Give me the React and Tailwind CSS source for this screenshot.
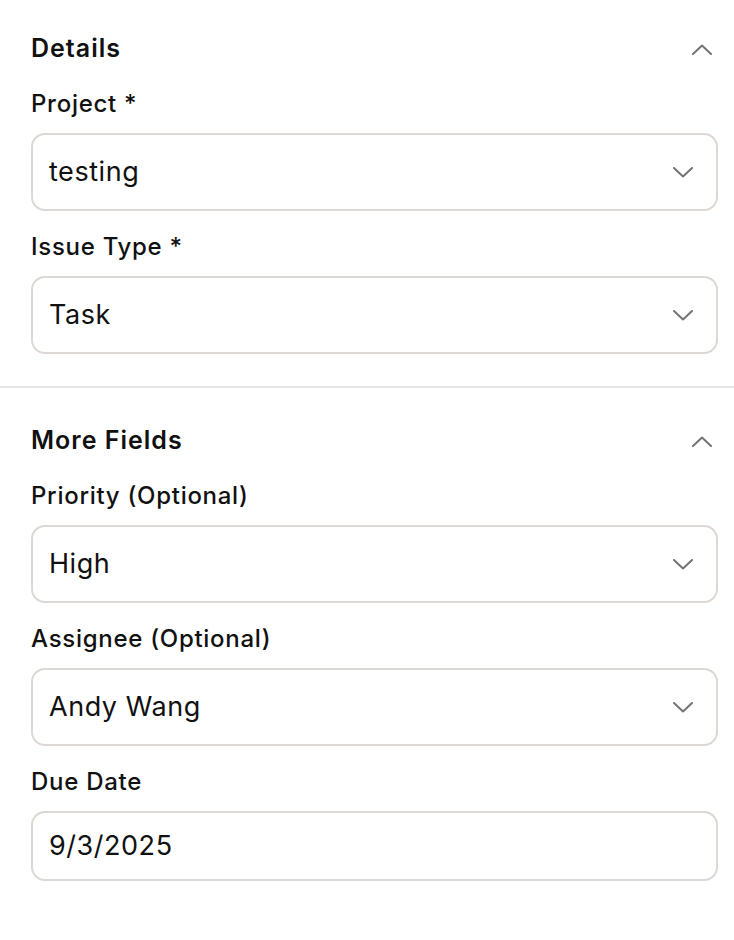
import React from "react";

function Chevron({ up = false }) {
  return (
    <svg width="20" height="11" viewBox="0 0 20 11" fill="none" className="shrink-0">
      <polyline
        points={up ? "1,10 10,1.5 19,10" : "1,1 10,9.5 19,1"}
        stroke="#737373"
        strokeWidth="2"
        strokeLinecap="round"
        strokeLinejoin="round"
      />
    </svg>
  );
}

function SelectBox({ value }) {
  return (
    <div className="flex items-center justify-between h-[78px] rounded-[14px] border-2 border-[#dcd8d5] pl-[16px] pr-[23px] bg-white">
      <span className="text-[27px] tracking-[0.02em] text-[#111]">{value}</span>
      <Chevron />
    </div>
  );
}

function Field({ label, value, select = true, first = false }) {
  return (
    <div className={first ? "mt-[25px]" : "mt-[22px]"}>
      <div className="h-[28px] leading-[28px] text-[24px] tracking-[0.03em] font-medium text-[#111]">{label}</div>
      <div className="mt-[15px]">
        {select ? (
          <SelectBox value={value} />
        ) : (
          <div className="flex items-center h-[70px] rounded-[14px] border-2 border-[#dcd8d5] pl-[16px] bg-white">
            <span className="text-[27px] tracking-[0.02em] text-[#111]">{value}</span>
          </div>
        )}
      </div>
    </div>
  );
}

function Section({ title, children }) {
  return (
    <div>
      <div className="flex items-center justify-between h-[32px]">
        <h2 className="text-[25px] tracking-[0.04em] font-semibold text-[#111]">{title}</h2>
        <div className="mr-[6px]">
          <Chevron up />
        </div>
      </div>
      {children}
    </div>
  );
}

export default function App() {
  return (
    <div className="w-[734px] h-[940px] bg-white" style={{ fontFamily: "Inter, 'Noto Sans', sans-serif" }}>
      <div className="pl-[31px] pr-[16px] pt-[33px] pb-[32px]">
        <Section title="Details">
          <Field first label="Project *" value="testing" />
          <Field label="Issue Type *" value="Task" />
        </Section>
      </div>
      <div className="h-[2px] bg-[#e8e6e5]"></div>
      <div className="pl-[31px] pr-[16px] pt-[37px]">
        <Section title="More Fields">
          <Field first label="Priority (Optional)" value="High" />
          <Field label="Assignee (Optional)" value="Andy Wang" />
          <Field label="Due Date" value="9/3/2025" select={false} />
        </Section>
      </div>
    </div>
  );
}
